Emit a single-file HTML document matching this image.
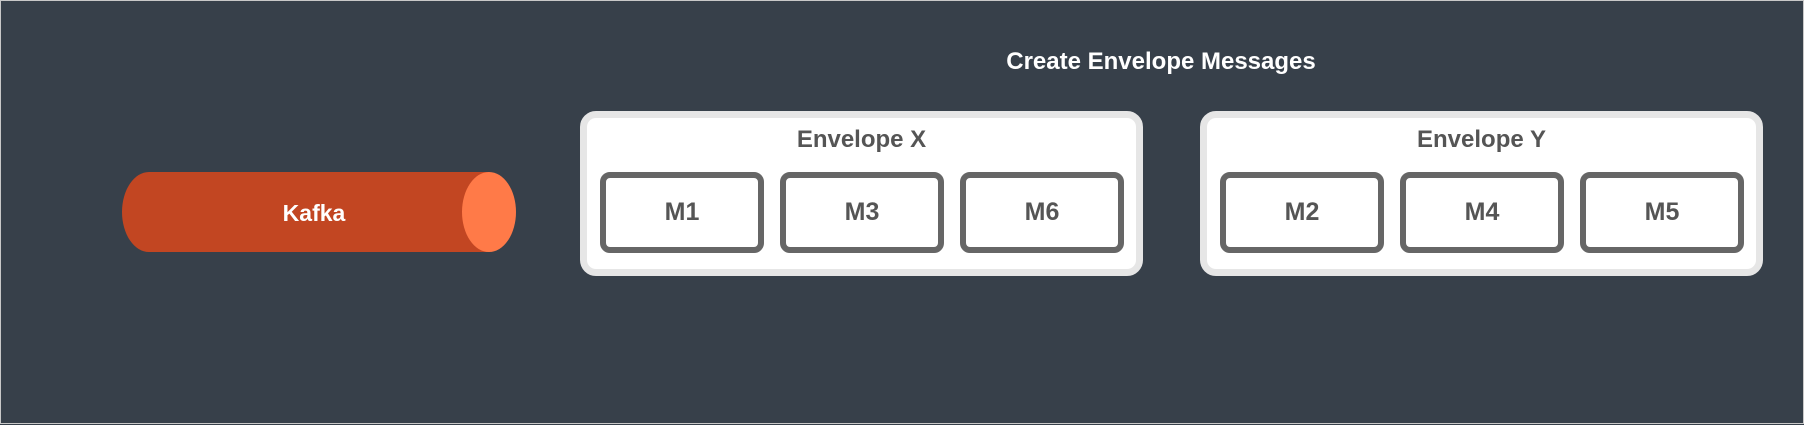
<!DOCTYPE html>
<html><head><style>
html,body{margin:0;padding:0}
body{width:1804px;height:424px;background:#37404a;position:relative;overflow:hidden;font-family:"Liberation Sans",Arial,sans-serif;font-weight:bold;box-sizing:border-box;border:1px solid #c8c8c8}
.title{position:absolute;left:0;width:2320px;top:46px;text-align:center;color:#fff;font-size:24px;line-height:30px}
.env{position:absolute;top:110px;width:549px;height:151px;background:#fff;border:7px solid #e6e6e6;border-radius:16px}
.env .h{position:absolute;left:0;right:0;top:7px;text-align:center;color:#555;font-size:24px;line-height:30px}
.m{position:absolute;top:54px;width:152px;height:69px;border:6px solid #666;border-radius:10px;background:#fff;color:#555;font-size:25px;line-height:69px;text-align:center}
</style></head><body>
<div class="title">Create Envelope Messages</div>
<svg style="position:absolute;left:0;top:0" width="600" height="424">
<path d="M148 171 H488 V251 H148 A27 40 0 0 1 148 171 Z" fill="#c24622"/>
<ellipse cx="488" cy="211" rx="27" ry="40" fill="#ff7a48"/>
<text x="313" y="220" fill="#fff" font-size="23" font-weight="bold" text-anchor="middle" font-family="Liberation Sans, Arial, sans-serif">Kafka</text>
</svg>
<div class="env" style="left:579px"><div class="h">Envelope X</div>
<div class="m" style="left:13px">M1</div><div class="m" style="left:193px">M3</div><div class="m" style="left:373px">M6</div></div>
<div class="env" style="left:1199px"><div class="h">Envelope Y</div>
<div class="m" style="left:13px">M2</div><div class="m" style="left:193px">M4</div><div class="m" style="left:373px">M5</div></div>
</body></html>
